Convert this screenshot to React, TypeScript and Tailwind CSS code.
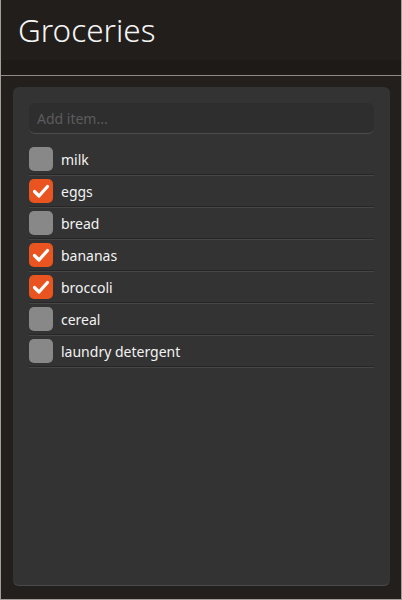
const items = [
  { name: "milk", done: false },
  { name: "eggs", done: true },
  { name: "bread", done: false },
  { name: "bananas", done: true },
  { name: "broccoli", done: true },
  { name: "cereal", done: false },
  { name: "laundry detergent", done: false },
];

const Check = () => (
  <svg viewBox="0 0 24 24" className="w-[24px] h-[24px]">
    <path d="M5.5 12.5l4.5 4.5L18.5 7.5" fill="none" stroke="#ffffff" strokeWidth="3.2" strokeLinecap="round" strokeLinejoin="round" />
  </svg>
);

export default function App() {
  return (
    <div className="w-[402px] h-[600px] bg-[#231f1c] border-x border-b border-[#a39e98] flex flex-col font-['Noto_Sans',sans-serif]">
      <header className="h-[60px] px-[17px] flex items-center bg-[#221e1b]">
        <h1 className="text-[31.5px] font-light text-[#f5f5f5] leading-none">Groceries</h1>
      </header>
      <div className="h-[15px] bg-[#1d1a17]" />
      <div className="h-px bg-[#8f8a84]" />
      <main className="flex-1 flex flex-col pl-[12px] pr-[11px] pt-[11px] pb-[13px]">
        <section className="flex-1 bg-[#333333] rounded-md border-b border-[#4a4a4a] px-[16px] pt-[16px]">
          <input
            placeholder="Add item..."
            className="w-full h-[31px] bg-[#2e2e2e] rounded-md border-b border-[#4c4c4c] px-[8px] text-[14px] text-[#eeeeee] placeholder:text-[#5c5c5c] outline-none"
          />
          <ul className="mt-[10px]">
            {items.map((item) => (
              <li key={item.name} className="h-[32px] flex flex-col">
                <div className="flex-1 flex items-center gap-[8px]">
                  <span
                    className={
                      item.done
                        ? "w-[24px] h-[24px] rounded-[5px] bg-[#e95420] flex items-center justify-center"
                        : "w-[24px] h-[24px] rounded-[5px] bg-[#888888]"
                    }
                  >
                    {item.done && <Check />}
                  </span>
                  <span className="text-[14px] text-[#f2f2f2]">{item.name}</span>
                </div>
                <div className="h-px bg-[#262626]" />
                <div className="h-px bg-[#464646]" />
              </li>
            ))}
          </ul>
        </section>
      </main>
    </div>
  );
}
